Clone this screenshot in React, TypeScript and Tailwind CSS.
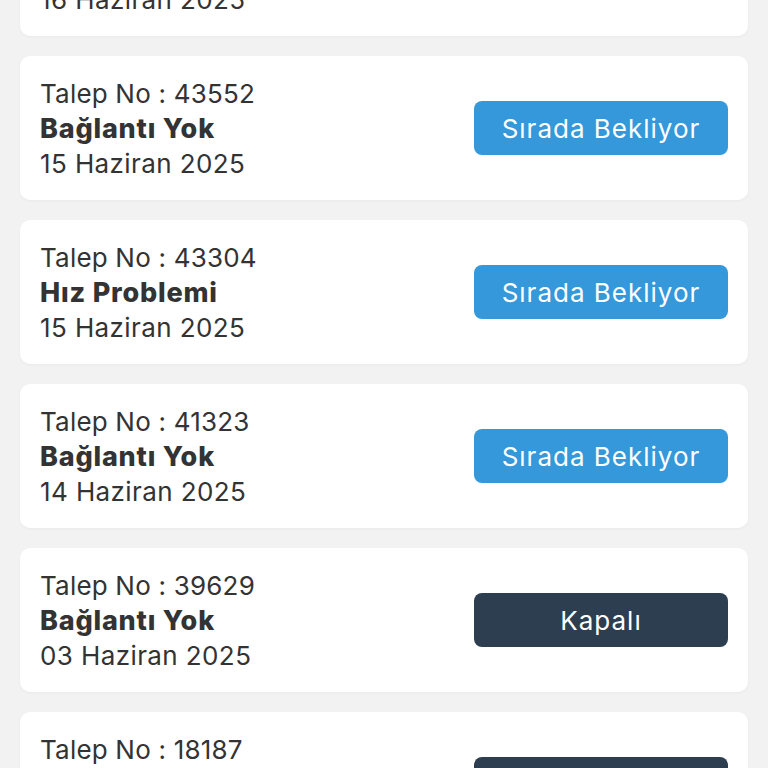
import React from "react";

type Ticket = { no: string; title: string; date: string; status: "open" | "closed" };

const tickets: Ticket[] = [
  { no: "44012", title: "Bağlantı Yok", date: "16 Haziran 2025", status: "open" },
  { no: "43552", title: "Bağlantı Yok", date: "15 Haziran 2025", status: "open" },
  { no: "43304", title: "Hız Problemi", date: "15 Haziran 2025", status: "open" },
  { no: "41323", title: "Bağlantı Yok", date: "14 Haziran 2025", status: "open" },
  { no: "39629", title: "Bağlantı Yok", date: "03 Haziran 2025", status: "closed" },
  { no: "18187", title: "Bağlantı Yok", date: "12 Mayıs 2025", status: "closed" },
];

export default function App() {
  return (
    <div className="h-[768px] overflow-hidden bg-[#f2f2f2] font-['Inter','Noto_Sans',sans-serif] text-[#333333]">
      <div className="mt-[-108px] flex flex-col gap-[20px] px-[20px]">
        {tickets.map((t) => (
          <div
            key={t.no}
            className="flex h-[144px] shrink-0 items-center justify-between rounded-[10px] bg-white px-[20px] shadow-[0_1px_3px_rgba(0,0,0,0.04)]"
          >
            <div className="flex flex-col text-[26px] leading-[35px] tracking-[0.4px]">
              <span className="tracking-[0.2px]">Talep No : {t.no}</span>
              <span className="text-[27px] font-extrabold tracking-[0.8px]">{t.title}</span>
              <span>{t.date}</span>
            </div>
            <div
              className={
                t.status === "open"
                  ? "flex h-[54px] w-[254px] items-center justify-center rounded-[8px] bg-[#3498db] text-[26px] tracking-[1px] text-white"
                  : "flex h-[54px] w-[254px] items-center justify-center rounded-[8px] bg-[#2c3e50] text-[26px] tracking-[1px] text-white"
              }
            >
              {t.status === "open" ? "Sırada Bekliyor" : "Kapalı"}
            </div>
          </div>
        ))}
      </div>
    </div>
  );
}
